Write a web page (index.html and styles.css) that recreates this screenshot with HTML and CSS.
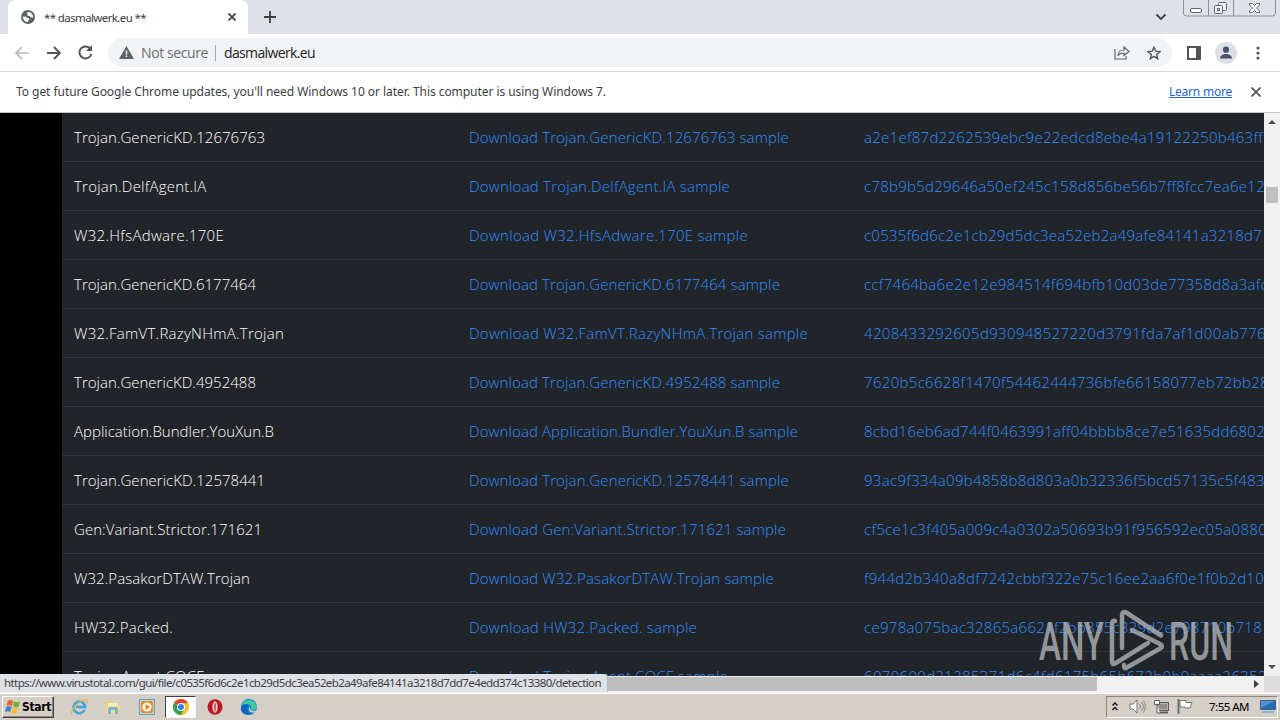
FILE: index.html
```
<!DOCTYPE html>
<html lang="en">
<head>
<meta charset="utf-8">
<title>** dasmalwerk.eu **</title>
<link rel="stylesheet" href="styles.css">
</head>
<body>
<div class="desktop">
  <header class="tabstrip">
    <div class="tab">
      <svg class="globe" width="14" height="14" viewBox="0 0 14 14"><circle cx="7" cy="7" r="7" fill="#5f6368"/><path d="M1.800 6.500h3l1.500 1.500h1.700v2L6.500 12C4 12 2 9.500 1.800 6.500zM6 3.500C6 2 8 1.800 9.500 2.500c2 1 2.800 3 2.700 5H10L8.500 6H6.800z" fill="#f1f3f4"/></svg>
      <span class="tab-title" data-w="102">** dasmalwerk.eu **</span>
      <svg class="tab-x" width="8" height="8" viewBox="0 0 8 8"><path d="M.5.5l7 7M7.500.5l-7 7" stroke="#3c4043" stroke-width="1.700"/></svg>
    </div>
    <svg class="plus" width="12" height="12" viewBox="0 0 12 12"><path d="M6 0v12M0 6h12" stroke="#3c4043" stroke-width="1.800"/></svg>
    <svg class="chev" width="12" height="8" viewBox="0 0 12 8"><path d="M1.500 1.500L6 6l4.500-4.500" fill="none" stroke="#3c4043" stroke-width="1.800"/></svg>
    <svg class="winctl" width="94" height="17" viewBox="0 0 94 17"><path d="M.5 0v13q0 3 3 3h86q3 0 3-3V0M25.500 0v16M50.500 0v16" fill="none" stroke="#8b9098"/><rect x="7.500" y="8.500" width="11" height="4" rx="1.500" fill="#fff" stroke="#626873"/><g fill="#eceef2" stroke="#626873"><rect x="35.500" y="2.500" width="8" height="8" rx="1"/><rect x="31.500" y="5.500" width="8" height="8" rx="1"/><rect x="34.500" y="8.500" width="2" height="2"/></g><path d="M66.500 3.500h3l2 2 2-2h3v1.500l-3 3 3 3v1.500h-3l-2-2-2 2h-3V11l3-3-3-3z" fill="#fff" stroke="#626873"/></svg>
  </header>

  <nav class="toolbar">
    <svg class="back" width="14" height="14" viewBox="0 0 14 14"><path d="M14 7H1.500M7 1L1 7l6 6" fill="none" stroke="#b4b7bb" stroke-width="1.700"/></svg>
    <svg class="fwd" width="14" height="14" viewBox="0 0 14 14"><path d="M0 7h12.500M7 1l6 6-6 6" fill="none" stroke="#505459" stroke-width="1.900"/></svg>
    <svg class="reload" width="15" height="15" viewBox="0 0 15 15"><path d="M12.400 4A6 6 0 1 0 13.300 9" fill="none" stroke="#505459" stroke-width="1.900"/><path d="M14 0v6H8z" fill="#505459"/></svg>
    <div class="omnibox">
      <svg width="15" height="13" viewBox="0 0 15 13"><path d="M7.500 0L15 13H0z" fill="#5f6368"/><path d="M7.500 4.500v4M7.500 9.500v1.500" stroke="#f1f3f4" stroke-width="1.500"/></svg>
      <span class="secure" data-w="67">Not secure</span>
      <span class="divider"></span>
      <span class="url" data-w="91">dasmalwerk.eu</span>
      <svg class="share" width="16" height="14" viewBox="0 0 16 14"><path d="M1 3v10h11v-3M4 10c0-4 3-6 6-6V1l5 4.500L10 9.500V7c-3 0-5 1-6 3z" fill="none" stroke="#5f6368" stroke-width="1.200"/></svg>
      <svg class="star" width="14" height="14" viewBox="0 0 14 14"><path d="M7 1.200l1.700 4 4.300.4-3.300 2.800 1 4.300L7 10.400l-3.700 2.300 1-4.300L1 5.600l4.300-.4z" fill="none" stroke="#505459" stroke-width="1.400"/></svg>
    </div>
    <svg class="side" width="14" height="14" viewBox="0 0 14 14"><path d="M1 1h12v12H1z" fill="#fff" stroke="#505459" stroke-width="2"/><path d="M9 1h4v12H9z" fill="#505459"/></svg>
    <svg class="avatar" width="22" height="22" viewBox="0 0 22 22"><circle cx="11" cy="11" r="11" fill="#dde0e6"/><circle cx="11" cy="7.700" r="3.100" fill="#47546b"/><path d="M5 16.500c0-3 3-4.500 6-4.500s6 1.500 6 4.500z" fill="#47546b"/></svg>
    <svg class="dots" width="4" height="14" viewBox="0 0 4 14"><g fill="#505459"><circle cx="2" cy="2" r="1.600"/><circle cx="2" cy="7" r="1.600"/><circle cx="2" cy="12" r="1.600"/></g></svg>
  </nav>

  <div class="infobar">
    <span data-w="590">To get future Google Chrome updates, you'll need Windows 10 or later. This computer is using Windows 7.</span>
    <a class="learn" data-w="63">Learn more</a>
    <svg width="10" height="10" viewBox="0 0 10 10"><path d="M.5.5l9 9M9.500.5l-9 9" stroke="#505459" stroke-width="1.700"/></svg>
  </div>

  <main class="viewport">
    <section class="page">
      <div class="table">
        <div class="row"><span data-w="191">Trojan.GenericKD.12676763</span><a data-w="320">Download Trojan.GenericKD.12676763 sample</a><a data-w="399">a2e1ef87d2262539ebc9e22edcd8ebe4a19122250b463ff</a></div>
        <div class="row"><span data-w="132.500">Trojan.DelfAgent.IA</span><a data-w="261">Download Trojan.DelfAgent.IA sample</a><a data-w="401">c78b9b5d29646a50ef245c158d856be56b7ff8fcc7ea6e12</a></div>
        <div class="row"><span data-w="150">W32.HfsAdware.170E</span><a data-w="279">Download W32.HfsAdware.170E sample</a><a data-w="398">c0535f6d6c2e1cb29d5dc3ea52eb2a49afe84141a3218d7</a></div>
        <div class="row"><span data-w="182">Trojan.GenericKD.6177464</span><a data-w="311">Download Trojan.GenericKD.6177464 sample</a><a data-w="404">ccf7464ba6e2e12e984514f694bfb10d03de77358d8a3afc</a></div>
        <div class="row"><span data-w="210">W32.FamVT.RazyNHmA.Trojan</span><a data-w="339">Download W32.FamVT.RazyNHmA.Trojan sample</a><a data-w="402">4208433292605d930948527220d3791fda7af1d00ab776</a></div>
        <div class="row"><span data-w="182">Trojan.GenericKD.4952488</span><a data-w="311">Download Trojan.GenericKD.4952488 sample</a><a data-w="405">7620b5c6628f1470f54462444736bfe66158077eb72bb28</a></div>
        <div class="row"><span data-w="200">Application.Bundler.YouXun.B</span><a data-w="329">Download Application.Bundler.YouXun.B sample</a><a data-w="401">8cbd16eb6ad744f0463991aff04bbbb8ce7e51635dd6802</a></div>
        <div class="row"><span data-w="191">Trojan.GenericKD.12578441</span><a data-w="320">Download Trojan.GenericKD.12578441 sample</a><a data-w="401">93ac9f334a09b4858b8d803a0b32336f5bcd57135c5f483</a></div>
        <div class="row"><span data-w="188">Gen:Variant.Strictor.171621</span><a data-w="317">Download Gen:Variant.Strictor.171621 sample</a><a data-w="403">cf5ce1c3f405a009c4a0302a50693b91f956592ec05a0880</a></div>
        <div class="row"><span data-w="176">W32.PasakorDTAW.Trojan</span><a data-w="305">Download W32.PasakorDTAW.Trojan sample</a><a data-w="400">f944d2b340a8df7242cbbf322e75c16ee2aa6f0e1f0b2d10</a></div>
        <div class="row"><span data-w="99">HW32.Packed.</span><a data-w="228">Download HW32.Packed. sample</a><a data-w="398">ce978a075bac32865a6621f2bb855c329d2e798710b718</a></div>
        <div class="row"><span data-w="130">Trojan.Agent.CQCF</span><a data-w="259">Download Trojan.Agent.CQCF sample</a><a data-w="403">6070600d21285371d6c4fd6175b65b672b0b0aaaa26352</a></div>
      </div>
    </section>
    <div class="vscroll">
      <svg width="8" height="4" viewBox="0 0 8 4"><path d="M0 4l4-4 4 4z" fill="#505050"/></svg>
      <div class="vthumb"></div>
      <svg class="down" width="8" height="4" viewBox="0 0 8 4"><path d="M0 0l4 4 4-4z" fill="#505050"/></svg>
    </div>
    <svg class="watermark" width="194" height="66" viewBox="0 0 194 66">
      <text x="0" y="52" textLength="65" lengthAdjust="spacingAndGlyphs">ANY</text>
      <g fill="none" stroke="#b4b6b8" stroke-width="4.500" stroke-linejoin="round" stroke-linecap="round"><path d="M76 13q-3-1-3 3V54q0 3 3 1.500L109 35"/><path d="M83 40V8q0-6 5-3l34 22.500"/><path d="M93 22l28 14q4 2 0 4.500L87 60q-2 1-2-3"/></g>
      <text x="130" y="52" textLength="64" lengthAdjust="spacingAndGlyphs">RUN</text>
    </svg>
  </main>

  <div class="hscroll">
    <div class="hthumb"></div>
    <svg width="5" height="8" viewBox="0 0 5 8"><path d="M0 0l5 4-5 4z" fill="#404040"/></svg>
    <div class="corner"></div>
    <div class="status"><span data-w="597">https://www.virustotal.com/gui/file/c0535f6d6c2e1cb29d5dc3ea52eb2a49afe84141a3218d7dd7e4edd374c13380/detection</span></div>
  </div>

  <footer class="taskbar">
    <div class="start">
      <svg width="16" height="15" viewBox="0 0 16 15"><path d="M3 2q3-2 5 0L7 7Q4 5.500 1.500 7z" fill="#e8602c"/><path d="M9 2.500q3 1.500 6 0L13.500 8q-3 1-5.500-.5z" fill="#76ad38"/><path d="M1.200 8q3-1.500 5.500 0l-1.500 5q-2-1.500-5 0z" fill="#3c82cb"/><path d="M7.700 8.500q3 1.500 5.500.5l-1.500 5q-3 1-5.500-.5z" fill="#f4bc32"/></svg>
      <span data-w="29">Start</span>
    </div>
    <div class="apps">
      <svg width="18" height="18" viewBox="0 0 18 18"><path d="M14.500 12a5.800 5.800 0 1 1 .6-3H6" fill="none" stroke="#45a4e2" stroke-width="2.600"/><path d="M2 16C-1 13 12 0 16.500 2c1 .6.5 2 0 3" fill="none" stroke="#e5b946" stroke-width="1.300"/></svg>
      <svg width="18" height="18" viewBox="0 0 18 18"><path d="M2 3h5l1 2h7v10H2z" fill="#e9cf78"/><path d="M4 5h10v6H4z" fill="#f8efbd"/><path d="M2 8h14v7H2z" fill="#f3dc8d"/><path d="M4 16v-5q0-2 2-2h6q2 0 2 2v5h-3v-4H7v4z" fill="#7cb6d7"/></svg>
      <svg width="18" height="18" viewBox="0 0 18 18"><path d="M1.500 1.500h15v15h-15z" fill="#b8d7eb" stroke="#649fbf"/><rect x="3" y="3" width="12" height="12" rx="2" fill="#f28a1b"/><circle cx="9" cy="9" r="4.600" fill="#fff"/><path d="M7.500 6l4.500 3-4.500 3z" fill="#ec7900"/></svg>
      <div class="active"><svg width="16" height="16" viewBox="0 0 16 16"><circle cx="8" cy="8" r="8" fill="#f4c52e"/><path d="M8 8L1.070 4A8 8 0 0 1 14.930 4z" fill="#de4536"/><path d="M8 8L1.070 4A8 8 0 0 0 8 16l3.500-6z" fill="#33a151"/><path d="M8 4.200h7A8 8 0 0 1 8 16l3.500-6z" fill="#f4c52e"/><circle cx="8" cy="8" r="4" fill="#fff"/><circle cx="8" cy="8" r="3" fill="#377fe5"/></svg></div>
      <svg width="18" height="18" viewBox="0 0 18 18"><ellipse cx="9" cy="9" rx="7.500" ry="7.800" fill="#bd1720"/><ellipse cx="9" cy="9" rx="2.600" ry="5.800" fill="#e8d8d4"/><ellipse cx="9" cy="9" rx="1" ry="4.800" fill="#c4686a"/></svg>
      <svg width="18" height="18" viewBox="0 0 18 18"><circle cx="9" cy="9" r="8" fill="#1684d8"/><path d="M1.300 8A8 8 0 0 1 17 9c0 3-5 4-6 2 1-3-1-5-4-5-3 0-5 1-5.700 2z" fill="#42c99c"/><path d="M1 9c1-3 6-4 8-1-3 2-2 6 2 7.500C5 19 0 14 1 9z" fill="#0c68bd"/><path d="M10 8.500c-1 3 2 5 6 4l-1 2c-5 1-8-3-5-6z" fill="#d5d0c8"/></svg>
    </div>
    <div class="tray">
      <svg class="expand" width="6" height="9" viewBox="0 0 6 9"><path d="M.5 3.500L3 1l2.500 2.500M.5 8L3 5.500 5.500 8" fill="none" stroke="#111" stroke-width="1.400"/></svg>
      <svg class="sound" width="17" height="15" viewBox="0 0 17 15"><path d="M1 5h3l4-4v13l-4-4H1z" fill="#fff" stroke="#74726e"/><path d="M10.500 5q2 2.500 0 5M12.500 3q3.500 4.500 0 9M14.500 1.500q3.500 6 0 12" fill="none" stroke="#85837f"/></svg>
      <svg class="net" width="17" height="15" viewBox="0 0 17 15"><rect x="4.500" y="3.500" width="11" height="8" fill="#b4b2ae" stroke="#5f5d5a"/><path d="M6 5h8v5H6z" fill="#8e8d8a"/><path d="M6 13.500h9" stroke="#5f5d5a" stroke-width="2"/><path d="M1.500 1.500h5v4h-5zM4 6v8h3" fill="#fff" stroke="#5f5d5a"/></svg>
      <svg class="flag" width="17" height="15" viewBox="0 0 17 15"><path d="M1.500 0v15" stroke="#6d6b67" stroke-width="2"/><path d="M3 1.500h6v2h6l-2 5.500H8V8H3z" fill="#fff" stroke="#777571"/></svg>
      <span class="clock" data-w="40">7:55 AM</span>
      <svg class="show" width="16" height="13" viewBox="0 0 16 13"><path d="M.5.5h15v9H.5z" fill="#2468b8" stroke="#46617f"/><path d="M1 1h14L1 8z" fill="#4e91d6"/><path d="M2 11h12v2H2z" fill="#90b1d3"/></svg>
    </div>
  </footer>
</div>
<script src="fit.js"></script>
</body>
</html>
```
FILE: styles.css
```
* { box-sizing: border-box; }
body { margin: 0; font: 12px "Noto Sans", "Open Sans", sans-serif; color: #3c4043; overflow: hidden; }
svg { display: block; flex: none; }
[data-w] { display: inline-block; white-space: pre; }
.desktop { width: 1280px; height: 720px; display: flex; flex-direction: column; overflow: hidden; }

.tabstrip { height: 34px; background: #dee1e6; display: flex; flex: none; }
.tab { width: 240px; margin-left: 8px; height: 34px; background: #fff; border-radius: 8px 8px 0 0; display: flex; align-items: center; padding-left: 13px; }
.tab-title { margin-left: 9px; font-size: 11.5px; }
.tab-x { margin-left: 82px; }
.plus { margin: 11px 0 0 16px; }
.chev { margin: 13px 0 0 auto; }
.winctl { margin: 0 3px 0 16px; }

.toolbar { height: 38px; background: #fff; border-bottom: 1px solid #d5d7da; display: flex; align-items: center; flex: none; padding-left: 15px; }
.fwd { margin-left: 18px; }
.reload { margin-left: 17px; }
.omnibox { margin-left: 15px; width: 1064px; height: 29px; border-radius: 15px; background: #f1f3f4; display: flex; align-items: center; padding: 0 4px 0 11px; }
.secure { margin-left: 7px; font-size: 14px; color: #6b6f74; font-family: "Open Sans", sans-serif; }
.divider { width: 1px; height: 16px; background: #a4a8ad; margin: 0 8px 0 7px; }
.url { font-size: 14px; color: #202124; font-family: "Open Sans", sans-serif; }
.share { margin-left: auto; }
.star { margin: 0 7px 0 17px; }
.side { margin-left: 15px; }
.avatar { margin-left: 14px; }
.dots { margin-left: 19px; }

.infobar { height: 41px; background: #fff; border-bottom: 1px solid #c5c7c9; display: flex; align-items: center; padding: 0 19px 1px 16px; flex: none; }
.learn { margin-left: auto; margin-right: 19px; color: #2a66c8; text-decoration: underline; }

.viewport { height: 563px; display: flex; position: relative; background: #000; overflow: hidden; flex: none; }
.page { width: 1264px; padding-left: 62px; overflow: hidden; }
.table { background: #212429; color: #fff; font: 300 15px/24px "Open Sans", sans-serif; }
.row { height: 49px; border-bottom: 1px solid #32353a; display: grid; grid-template-columns: 395px 395px 412px; padding: 12px 0 12px 12px; align-items: center; }
.row a { color: #2f90ff; }
.vscroll { width: 16px; background: #f1f1f1; display: flex; flex-direction: column; align-items: center; padding-top: 7px; }
.vthumb { width: 12px; height: 16px; background: #c1c1c1; margin-top: 63px; }
.down { margin: auto 0 7px; }
.watermark { position: absolute; left: 1039px; top: 495px; opacity: .78; }
.watermark text { font: 500 53px Roboto, sans-serif; fill: #b4b6b8; }

.hscroll { height: 16px; background: #f1f1f1; display: flex; align-items: center; position: relative; flex: none; }
.hthumb { width: 1097px; height: 14px; background: #bebebe; margin-right: 157px; }
.corner { width: 16px; height: 16px; background: #dcdcdc; margin-left: auto; }
.status { position: absolute; left: 0; top: -2px; width: 608px; height: 18px; background: #dee1e6; border-right: 1px solid #b5b8bd; border-radius: 0 4px 0 0; padding-left: 4px; line-height: 18px; font-size: 11.5px; }

.taskbar { height: 28px; background: #d5cfc7; border-top: 1px solid #f5f3ef; box-shadow: inset 0 1px #fff; display: flex; align-items: center; padding: 0 0 0 2px; flex: none; }
.start { width: 52px; height: 22px; border: 1px solid; border-color: #fff #404040 #404040 #fff; box-shadow: inset -1px -1px #888; display: flex; align-items: center; padding-left: 2px; gap: 1px; color: #000; font: bold 12px "DejaVu Sans Condensed", "DejaVu Sans", sans-serif; }
.apps { display: flex; align-items: center; margin-left: 16px; gap: 16px; }
.active { width: 31px; height: 22px; margin: 0 -6px 0 -7px; background: #fff; border: 1px solid; border-color: #404040 #f8f6f2 #f8f6f2 #404040; display: flex; align-items: center; justify-content: center; }
.tray { width: 172px; height: 22px; margin: 0 2px 0 auto; border: 1px solid; border-color: #8b8780 #fff #fff #8b8780; display: flex; align-items: center; padding-left: 5px; color: #000; }
.sound { margin-left: 11px; }
.net { margin-left: 7px; }
.flag { margin-left: 7px; }
.clock { margin-left: 15px; font-size: 11.5px; }
.show { margin-left: 11px; }
```
FILE: fit.js
```
// Adjusts tracking so that each label fills its declared width.
document.querySelectorAll('[data-w]').forEach(function (el) {
  el.style.width = 'max-content';
  var natural = el.getBoundingClientRect().width;
  var target = parseFloat(el.dataset.w);
  el.style.letterSpacing = ((target - natural) / el.textContent.length) + 'px';
  el.style.width = target + 'px';
  el.style.flex = 'none';
});
```
